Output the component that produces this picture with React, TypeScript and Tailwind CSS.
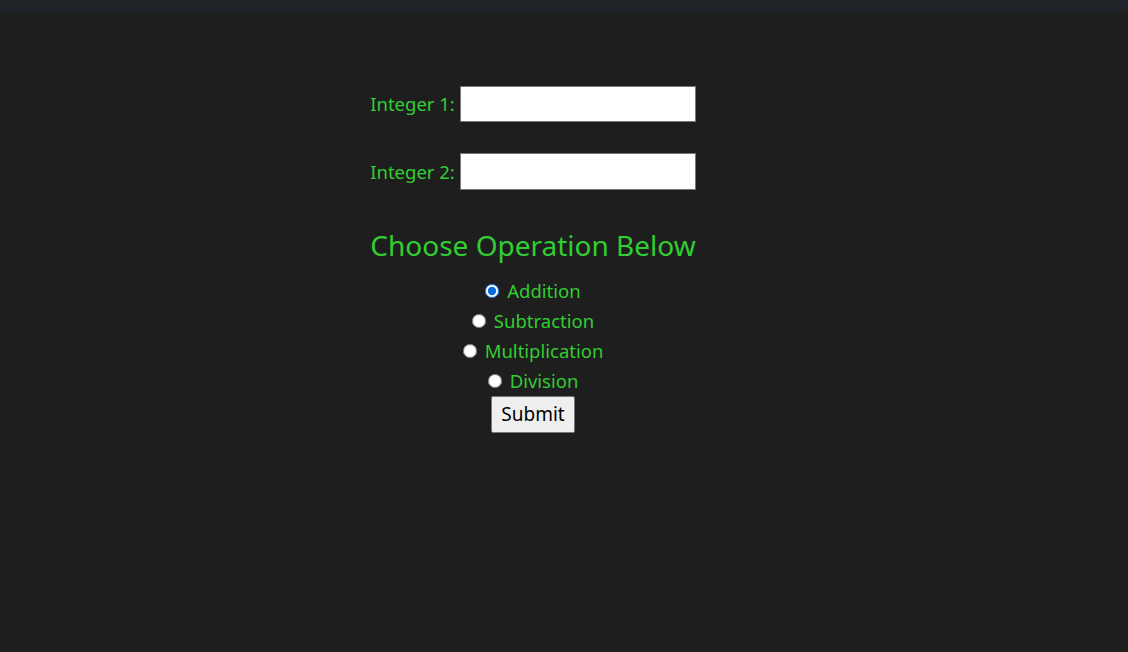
import React from "react";

export default function App() {
  const font = { fontFamily: '"Noto Sans", "Open Sans", sans-serif' };
  const ops = ["Addition", "Subtraction", "Multiplication", "Division"];
  return (
    <div className="w-[1128px] h-[652px] bg-[#1e1e1e] overflow-hidden" style={font}>
      <div className="h-[13px] bg-[#202328]" />
      <div className="w-[1066px] flex flex-col items-center pt-[73px] text-[#32cd32]">
        <div className="flex items-center gap-[5px] h-[36px]">
          <span className="text-[18.5px]">Integer 1:</span>
          <input type="text" className="w-[236px] h-[36px] bg-white border border-[#767676] outline-none" />
        </div>
        <div className="flex items-center gap-[5px] h-[37px] mt-[31px]">
          <span className="text-[18.5px]">Integer 2:</span>
          <input type="text" className="w-[236px] h-[37px] bg-white border border-[#767676] outline-none" />
        </div>
        <div className="text-[28px] leading-[40px] mt-[35px]">Choose Operation Below</div>
        <div className="flex flex-col items-center mt-[11px]">
          {ops.map((op, i) => (
            <label key={op} className="flex items-center h-[30px] text-[18.5px]">
              <input type="radio" name="op" defaultChecked={i === 0} className="w-[14px] h-[14px] mr-[8px] accent-[#0b6bde]" />
              {op}
            </label>
          ))}
        </div>
        <button className="h-[37px] px-[9px] bg-[#efefef] border border-[#767676] rounded-[2px] text-black text-[19px]">
          Submit
        </button>
      </div>
    </div>
  );
}
